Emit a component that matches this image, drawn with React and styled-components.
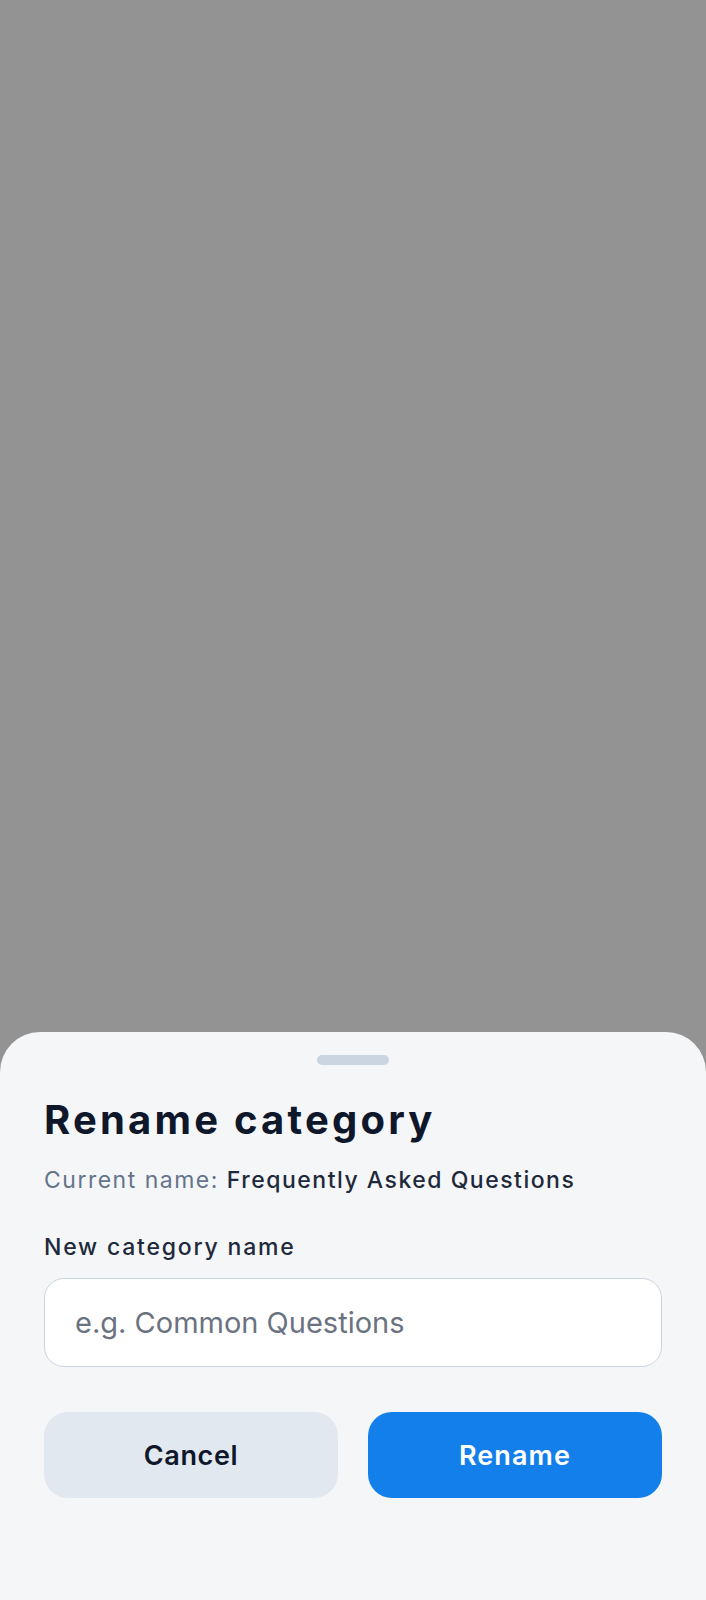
import React from 'react'
import styled, { createGlobalStyle } from 'styled-components'

const GlobalStyle = createGlobalStyle`
    * {
        box-sizing: border-box;
    }
    html, body {
        margin: 0;
        padding: 0;
        background: #939393;
    }
    body {
        font-family: Inter, "Noto Sans", "Liberation Sans", sans-serif;
    }
`

const App = () => {
    return (
        <Screen>
            <GlobalStyle />
            <Backdrop />
            <Sheet>
                <Handle />
                <Title>Rename category</Title>
                <Current>
                    Current name: <strong>Frequently Asked Questions</strong>
                </Current>
                <Label htmlFor='category-name'>New category name</Label>
                <Input id='category-name' placeholder='e.g. Common Questions' />
                <Actions>
                    <Button>Cancel</Button>
                    <Button primary>Rename</Button>
                </Actions>
            </Sheet>
        </Screen>
    )
}

const Screen = styled.div`
    display: flex;
    flex-direction: column;
    min-height: 1600px;
    background: #939393;
`

const Backdrop = styled.div`
    flex: 1;
    background: #939393;
`

const Sheet = styled.div`
    height: 568px;
    display: flex;
    flex-direction: column;
    padding: 23px 44px 0;
    background: #f5f6f8;
    border-radius: 40px 40px 0 0;
`

const Handle = styled.div`
    align-self: center;
    width: 72px;
    height: 10px;
    border-radius: 5px;
    background: #cbd5e1;
`

const Title = styled.h1`
    margin: 31px 0 0;
    font-size: 40px;
    line-height: 48px;
    font-weight: 700;
    color: #0f172a;
    letter-spacing: 3.2px;
`

const Current = styled.p`
    margin: 20px 0 0;
    font-size: 23px;
    line-height: 32px;
    color: #64748b;
    letter-spacing: 1.5px;
    strong {
        font-weight: 500;
        color: #1e293b;
    }
`

const Label = styled.label`
    margin-top: 35px;
    font-size: 23px;
    line-height: 32px;
    font-weight: 500;
    color: #1e293b;
    letter-spacing: 1.8px;
`

const Input = styled.input`
    margin-top: 15px;
    height: 89px;
    width: 100%;
    padding: 0 30px;
    border: 1.5px solid #cbd5e1;
    border-radius: 20px;
    background: #ffffff;
    font-family: inherit;
    font-size: 29px;
    color: #0f172a;
    outline: none;
    &::placeholder {
        color: #6b7280;
    }
`

const Actions = styled.div`
    margin-top: 45px;
    display: grid;
    grid-template-columns: 1fr 1fr;
    gap: 30px;
`

const Button = styled.button`
    height: 86px;
    border: none;
    border-radius: 24px;
    font-family: inherit;
    font-size: 27px;
    font-weight: 600;
    letter-spacing: ${p => p.primary ? '1.1px' : '0.6px'};
    background: ${p => p.primary ? '#137feb' : '#e2e8f0'};
    color: ${p => p.primary ? '#ffffff' : '#0f172a'};
`

export default App
